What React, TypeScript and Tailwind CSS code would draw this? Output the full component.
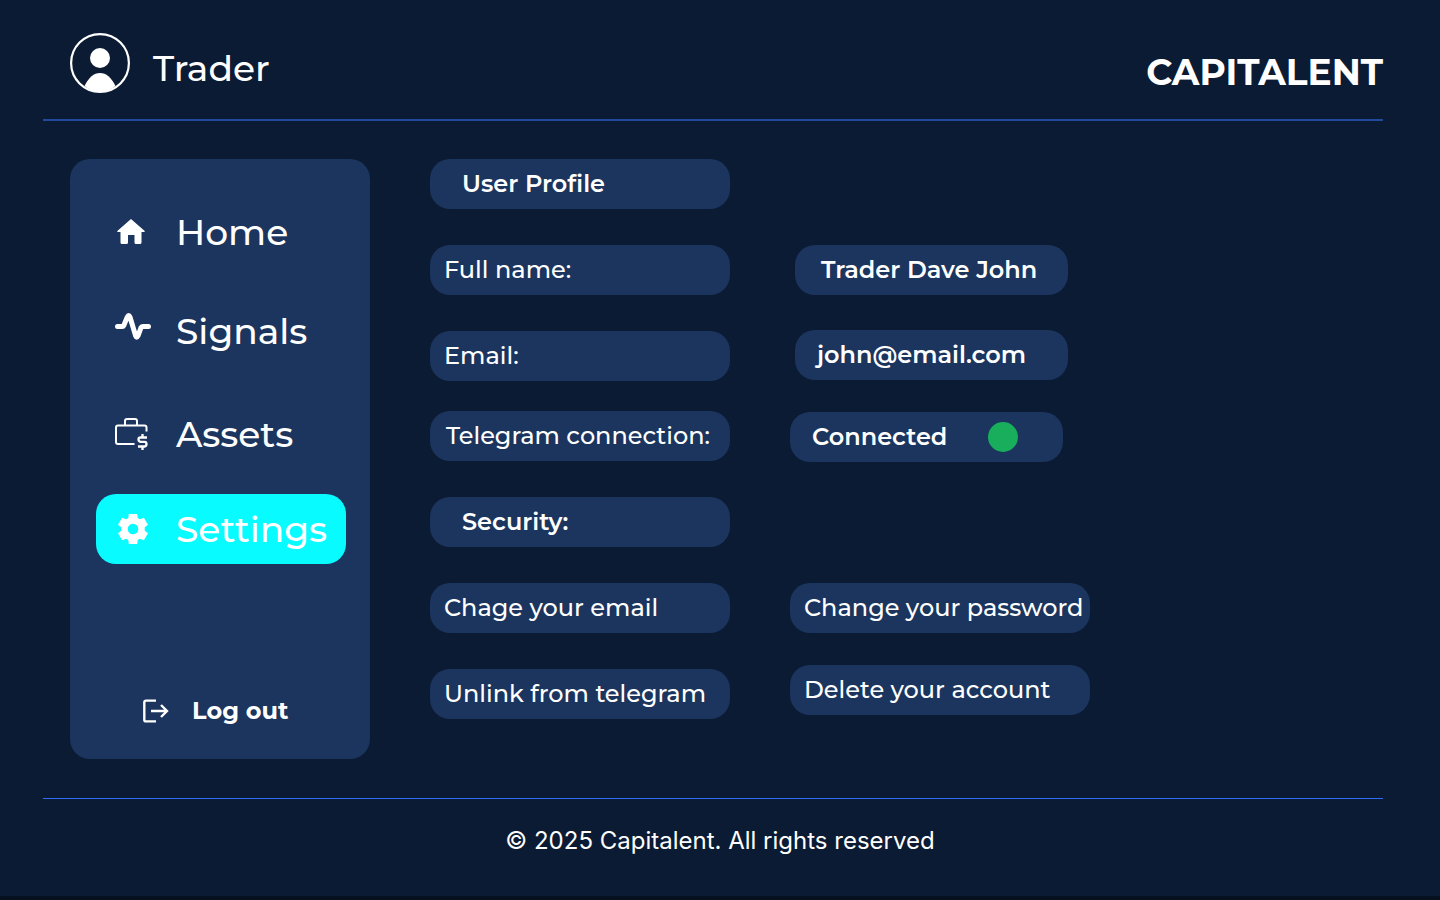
import React from "react";

type IconProps = { className?: string };

const HomeIcon = ({ className }: IconProps) => (
  <svg className={className} width="28" height="25" viewBox="0 0 28 25" fill="#fff" aria-hidden="true">
    <path d="M14 0 28 12.200 27.200 13H24.500V23.500Q24.500 25 23 25H19Q17.500 25 17.500 23.500V16H11V23.500Q11 25 9.500 25H5Q3.500 25 3.500 23.500V13H.8L0 12.200Z" />
  </svg>
);

const SignalIcon = ({ className }: IconProps) => (
  <svg className={className} width="36" height="27" viewBox="0 0 36 27" fill="none" stroke="#fff" strokeWidth="5" strokeLinecap="round" strokeLinejoin="round" aria-hidden="true">
    <path d="M2.500 13.500H7.200Q8.300 13.500 8.900 12.300L12.300 4Q13.700 1.200 15 4L20.600 22.800Q21.700 25.600 23 22.800L26 14.600Q26.500 13.500 27.700 13.500H33.500" />
  </svg>
);

const AssetsIcon = ({ className }: IconProps) => (
  <svg className={className} width="33" height="32" viewBox="0 0 33 32" fill="none" stroke="#fff" strokeWidth="2" aria-hidden="true">
    <path d="M19.500 26H3Q1 26 1 24V9.500Q1 7.500 3 7.500H29.500Q31.500 7.500 31.500 9.500V13.500M10 7.500V3Q10 1 12 1H20Q22 1 22 3V7.500" />
    <path strokeWidth="2.300" d="M32 19.500H25.500Q23.500 19.500 23.500 21.500T25.500 23.800H29.500Q31.500 23.800 31.500 26T29.500 28.500H23M27.500 16V19.500M27.500 28.500V32" />
  </svg>
);

const GearIcon = ({ className }: IconProps) => (
  <svg className={className} width="30" height="30" viewBox="0 0 30 30" fill="#fff" fillRule="evenodd" aria-hidden="true">
    <path d="M10.800 0H19.200L19.700 4 21.800 5.300 25.900 3.700 30 10.800 26.700 13.300V16.700L30 19.200 25.900 26.300 21.800 24.700 19.700 26 19.200 30H10.800L10.300 26 8.200 24.700 4.100 26.300 0 19.200 3.300 16.700V13.300L0 10.800 4.100 3.700 8.200 5.300 10.300 4ZM15 9.700A5.300 5.300 0 1 0 15 20.300 5.300 5.300 0 1 0 15 9.700Z" />
  </svg>
);

const LogoutIcon = () => (
  <svg width="26" height="24" viewBox="0 0 26 24" fill="none" stroke="#fff" strokeWidth="2.400" aria-hidden="true">
    <path d="M13 1.600H3Q1.300 1.600 1.300 3.300V20.700Q1.300 22.400 3 22.400H13M8 12H24M18 6 24 12 18 18" />
  </svg>
);

const Avatar = () => (
  <svg width="60" height="60" viewBox="0 0 60 60" aria-hidden="true">
    <circle cx="30" cy="30" r="28.900" fill="none" stroke="#fff" strokeWidth="2.200" />
    <circle cx="30" cy="25" r="10" fill="#fff" />
    <path d="M14.500 53C18.500 44.500 24 40 30 40S41.500 44.500 45.500 53Q38 59 30 59T14.500 53Z" fill="#fff" />
  </svg>
);

const pill = "flex h-[50px] items-center rounded-[20px] bg-[#1b355e] text-left whitespace-nowrap";
const navLink = "flex h-[70px] items-center rounded-[20px] text-4xl leading-[44px]";

export default function App() {
  return (
    <div className="flex min-h-screen flex-col border-b-4 border-[#06101f] bg-[#0b1b33] font-['Montserrat','Inter',sans-serif] font-medium text-white">
      <header className="ml-[43px] mr-[57px] flex h-[121px] items-center justify-between border-b-2 border-[#214a9c] pl-[27px]">
        <div className="flex items-center gap-[23px] pt-1.5">
          <Avatar />
          <span className="pt-2.5 text-4xl leading-[44px]">Trader</span>
        </div>
        <h1 className="pt-6 text-4xl font-bold leading-[44px]">CAPITALENT</h1>
      </header>

      <div className="flex items-start gap-[60px] px-[70px] pt-[38px]">
        <aside className="flex h-[600px] w-[300px] shrink-0 flex-col rounded-[20px] bg-[#1b355e] px-[26px] pb-6 pt-[38px]">
          <nav className="flex flex-col">
            <a href="#home" className={navLink}>
              <HomeIcon className="mb-0.5 ml-[21px] mr-[31px]" />Home
            </a>
            <a href="#signals" className={`${navLink} mt-[29px]`}>
              <SignalIcon className="mb-2.5 ml-[19px] mr-[25px]" />Signals
            </a>
            <a href="#assets" className={`${navLink} mt-[33px]`}>
              <AssetsIcon className="ml-[19px] mr-[28px]" />Assets
            </a>
            <a href="#settings" aria-current="page" className={`${navLink} -mr-0.5 mt-[25px] bg-[#08fcff]`}>
              <GearIcon className="ml-[22px] mr-[28px]" />Settings
            </a>
          </nav>
          <button type="button" className="mt-auto flex h-12 items-center gap-[23px] pl-[47px] text-2xl font-bold leading-none">
            <LogoutIcon />Log out
          </button>
        </aside>

        <main className="flex gap-[60px] text-2xl leading-none">
          <div className="flex w-[300px] flex-col">
            <div className="flex flex-col gap-9">
              <h2 className={`${pill} pl-8 font-semibold`}>User Profile</h2>
              <div className={`${pill} pl-3.5`}>Full name:</div>
              <div className={`${pill} pl-3.5`}>Email:</div>
            </div>
            <div className="mt-[30px] flex flex-col gap-9">
              <div className={`${pill} pl-4`}>Telegram connection:</div>
              <h2 className={`${pill} pl-8 font-semibold`}>Security:</h2>
              <button type="button" className={`${pill} pl-3.5`}>Chage your email</button>
              <button type="button" className={`${pill} pl-3.5`}>Unlink from telegram</button>
            </div>
          </div>

          <div className="flex w-[300px] flex-col pt-[86px]">
            <div className="ml-[5px] flex w-[273px] flex-col gap-[35px] font-semibold">
              <div className={`${pill} pl-[26px]`}>Trader Dave John</div>
              <div className={`${pill} pl-[22px]`}>john@email.com</div>
            </div>
            <div className={`${pill} mt-8 w-[273px] justify-between pl-[22px] pr-[45px] font-semibold`}>
              Connected
              <span className="size-[30px] rounded-full bg-[#18ae5c]" />
            </div>
            <div className="mt-[121px] flex flex-col gap-8">
              <button type="button" className={`${pill} pl-3.5`}>Change your password</button>
              <button type="button" className={`${pill} pl-3.5`}>Delete your account</button>
            </div>
          </div>
        </main>
      </div>

      <footer className="ml-[43px] mr-[57px] mt-[39px] border-t border-[#2f6df6] pl-[14px] pt-[26px] text-center font-['Inter',sans-serif] text-2xl font-normal">
        © 2025 Capitalent. All rights reserved
      </footer>
    </div>
  );
}
